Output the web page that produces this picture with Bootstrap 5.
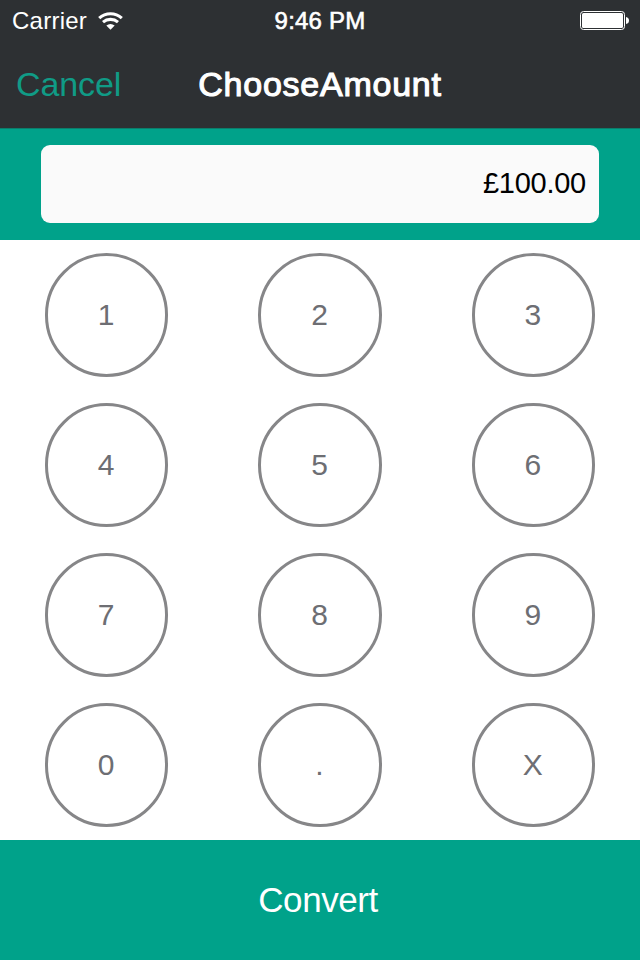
<!DOCTYPE html>
<html lang="en">
<head>
<meta charset="utf-8">
<meta name="viewport" content="width=device-width, initial-scale=1">
<title>ChooseAmount</title>
<link href="https://cdn.jsdelivr.net/npm/bootstrap@5.3.0/dist/css/bootstrap.min.css" rel="stylesheet">
<style>
body{font-family:"Liberation Sans",Arial,sans-serif;width:640px;height:960px;overflow:hidden;background:#fff}
.top-area{background:#2d3033;color:#fff;border-bottom:1px solid #0b7d6c;height:129px}
.status-row{height:40px;font-size:24px;line-height:42px}
.carrier{padding-left:12px;letter-spacing:.25px}
.carrier svg{margin-left:11px}
.clock{letter-spacing:.2px;-webkit-text-stroke:.6px #fff}
.battery{padding-right:10px}
.nav-row{height:88px;font-size:34px;line-height:88px}
.heading{letter-spacing:.75px;-webkit-text-stroke:1.1px #fff}
.teal{background:#00a28a}
.cancel{color:#109b86;font-size:34px;letter-spacing:-.1px}
.amount-band{height:111px;padding:16px 41px 17px}
.amount-box{height:78px;border-radius:9px;background:#fafafa;color:#000;font-size:29px;padding-right:13px;letter-spacing:-.25px}
.pad-row{height:150px}
.key{width:123.4px;height:123.4px;border:3px solid #868688;border-radius:50%;background:#fff;color:#6d6e73;font-size:30px;line-height:1;padding:0 1px 0 0}
.convert{height:120px;font-size:35px;color:#fff;letter-spacing:-.45px;padding:0 4px 0 0}
</style>
</head>
<body class="d-flex flex-column">
<header class="top-area">
  <div class="status-row row g-0 align-items-center">
    <div class="col-4 carrier d-flex align-items-center">Carrier
      <svg width="25" height="19" viewBox="0 0 25 19" aria-hidden="true"><g fill="none" stroke="#fff" stroke-width="3.1"><path d="M1.2 6.1Q6 1.7 12.5 1.7T23.8 6.1"/><path d="M5 10.1Q8.2 7.4 12.5 7.4T20 10.1"/></g><path d="M8.3 13.6Q12.5 10.4 16.7 13.6L12.5 17.8Z" fill="#fff"/></svg>
    </div>
    <div class="col-4 text-center clock">9:46 PM</div>
    <div class="col-4 battery d-flex justify-content-end">
      <svg width="50" height="20" viewBox="0 0 50 20" aria-hidden="true"><rect x=".5" y=".5" width="44" height="18" rx="3" fill="none" stroke="#fff"/><rect x="2" y="2" width="41" height="15" rx="1.5" fill="#fff"/><path d="M46 6q3 .5 3 3.5T46 13Z" fill="#fff"/></svg>
    </div>
  </div>
  <nav class="nav-row row g-0 align-items-center">
    <div class="col-3 ps-3"><a class="cancel text-decoration-none" href="#">Cancel</a></div>
    <div class="col-6 text-center heading">ChooseAmount</div>
  </nav>
</header>
<div class="teal amount-band"><div class="amount-box d-flex align-items-center justify-content-end">£100.00</div></div>
<main>
  <div class="pad-row row g-0 align-items-center text-center">
    <div class="col-4"><button class="key">1</button></div>
    <div class="col-4"><button class="key">2</button></div>
    <div class="col-4"><button class="key">3</button></div>
  </div>
  <div class="pad-row row g-0 align-items-center text-center">
    <div class="col-4"><button class="key">4</button></div>
    <div class="col-4"><button class="key">5</button></div>
    <div class="col-4"><button class="key">6</button></div>
  </div>
  <div class="pad-row row g-0 align-items-center text-center">
    <div class="col-4"><button class="key">7</button></div>
    <div class="col-4"><button class="key">8</button></div>
    <div class="col-4"><button class="key">9</button></div>
  </div>
  <div class="pad-row row g-0 align-items-center text-center">
    <div class="col-4"><button class="key">0</button></div>
    <div class="col-4"><button class="key">.</button></div>
    <div class="col-4"><button class="key">X</button></div>
  </div>
</main>
<button class="teal convert w-100 border-0">Convert</button>
</body>
</html>
